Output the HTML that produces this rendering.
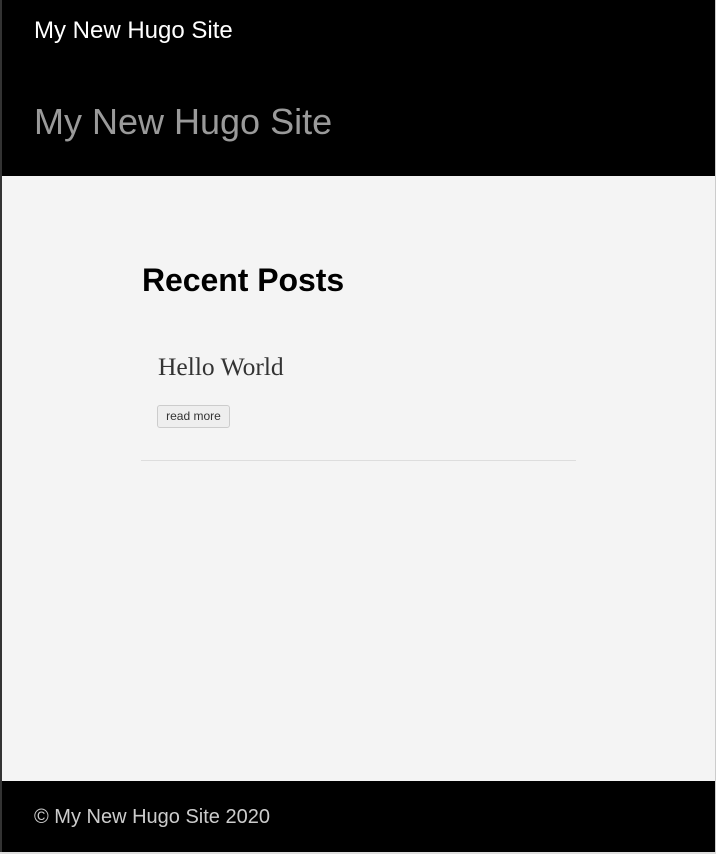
<!DOCTYPE html>
<html><head><style>
html,body{margin:0;padding:0;}
body{width:716px;height:854px;position:relative;overflow:hidden;background:#f4f4f4;font-family:"Liberation Sans",Arial,sans-serif;}
.lb{position:absolute;left:0;top:0;width:2px;height:854px;background:#333;z-index:5}
.rb{position:absolute;right:0;top:0;width:1px;height:854px;background:#ccc;z-index:5}
.bb{position:absolute;left:0;bottom:0;width:716px;height:2px;background:#ddd;z-index:5}
header{position:absolute;left:0;top:0;width:716px;height:176px;background:#000}
.t1{position:absolute;left:34px;top:17px;font-size:24px;color:#fff;white-space:nowrap}
.t2{position:absolute;left:34px;top:101px;font-size:36px;color:#9a9a9a;white-space:nowrap}
h2{position:absolute;left:142px;top:262px;margin:0;font-size:32px;font-weight:bold;color:#000;white-space:nowrap;letter-spacing:-0.05px}
.hw{position:absolute;left:158px;top:352px;font-family:"Liberation Serif",Georgia,serif;font-size:25.5px;color:#333;white-space:nowrap}
.btn{position:absolute;left:157px;top:405px;width:71px;height:21px;border:1px solid #ccc;border-radius:3px;background:#eee;font-size:12px;color:#333;text-align:center;line-height:21px;box-sizing:content-box}
.hr{position:absolute;left:141px;top:460px;width:435px;height:1px;background:#ddd}
footer{position:absolute;left:0;top:781px;width:716px;height:71px;background:#000}
.ft{position:absolute;left:34px;top:806px;font-size:20px;color:#ccc;white-space:nowrap}
</style></head><body>
<div class="lb"></div><div class="rb"></div><div class="bb"></div>
<header><div class="t1">My New Hugo Site</div><div class="t2">My New Hugo Site</div></header>
<h2>Recent Posts</h2>
<div class="hw">Hello World</div>
<div class="btn">read more</div>
<div class="hr"></div>
<footer></footer>
<div class="ft">© My New Hugo Site 2020</div>
</body></html>
